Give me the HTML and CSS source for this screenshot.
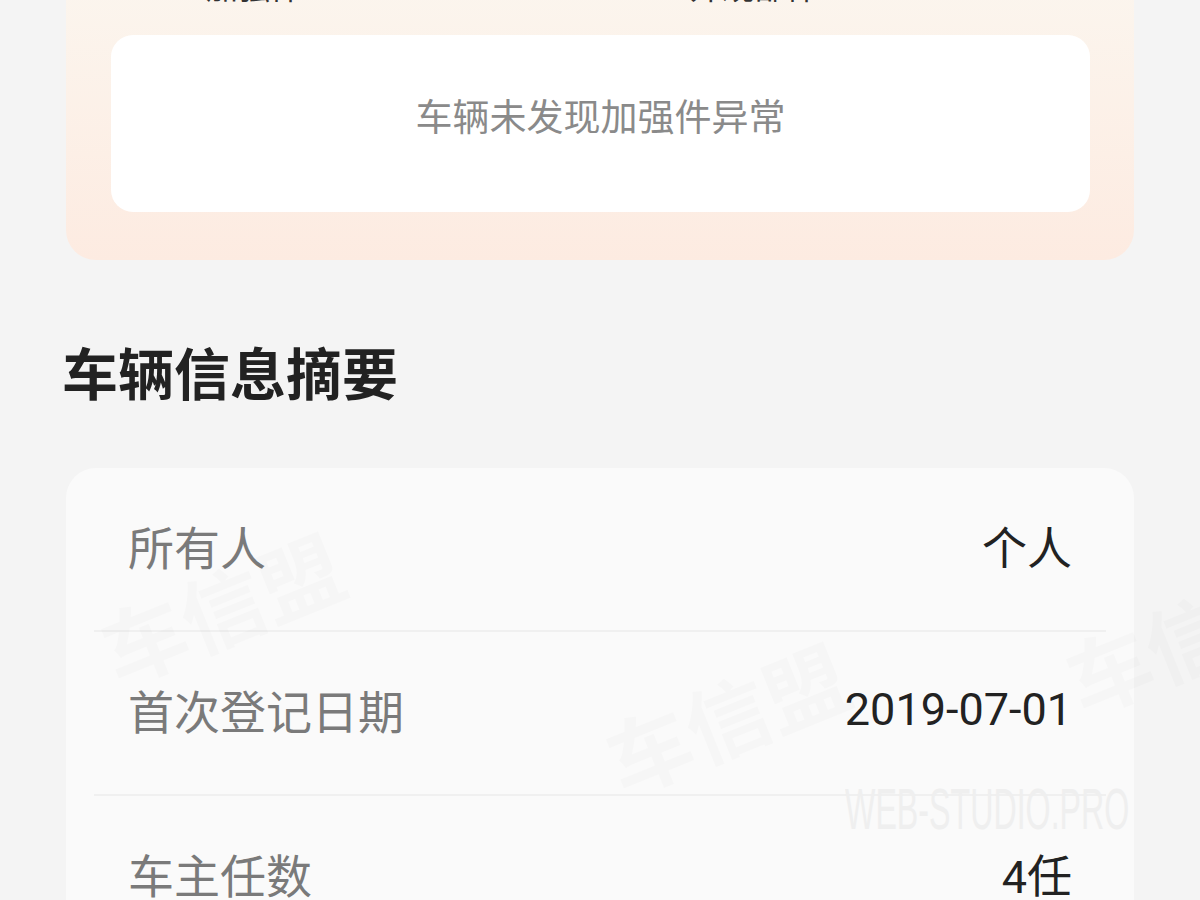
FILE: index.html
```html
<!DOCTYPE html>
<html lang="zh-CN">
<head>
  <meta charset="UTF-8" />
  <title>车辆信息摘要</title>
  <link rel="stylesheet" href="styles.css">
</head>
<body>

  <div class="page">
    <!-- Resultado da verificação de peças de reforço -->
    <section class="report">
      <div class="tabs">
        <span class="tab tab-left">加强件</span>
        <span class="tab tab-right">外观部件</span>
      </div>
      <div class="result">
        <p>车辆未发现加强件异常</p>
      </div>
    </section>

    <h2 class="section-title">车辆信息摘要</h2>

    <div class="info-card">
      <div class="info-row">
        <span class="label">所有人</span>
        <span class="value">个人</span>
      </div>
      <div class="info-row">
        <span class="label">首次登记日期</span>
        <span class="value">2019-07-01</span>
      </div>
      <div class="info-row">
        <span class="label">车主任数</span>
        <span class="value">4任</span>
      </div>
    </div>
  </div>

  <!-- marcas d'água -->
  <div class="watermark wm-1">车信盟</div>
  <div class="watermark wm-2">车信盟</div>
  <div class="watermark wm-3">车信盟</div>
  <div class="studio">WEB-STUDIO.PRO</div>

</body>
</html>
```

FILE: styles.css
```css
body {
  margin: 0;
  background: #f4f4f4;
  font-family: Roboto, "Noto Sans CJK SC", sans-serif;
  overflow: hidden;
  position: relative;
  height: 900px;
}

.page {
  width: 1068px;
  margin: -60px auto 0;
}

.report {
  background: linear-gradient(#fbf7f0, #fdebe1);
  border-radius: 30px;
  padding: 0 44px 48px 45px;
}

.tabs {
  height: 95px;
  display: flex;
  align-items: flex-end;
}

.tab {
  font-size: 32px;
  line-height: 32px;
  margin-bottom: 31px;
  color: #333;
}

.tab-left {
  margin-left: 95px;
}

.tab-right {
  margin-left: 388px;
}

.result {
  background: #fff;
  border-radius: 22px;
  height: 177px;
  display: flex;
  align-items: center;
  justify-content: center;
}

.result p {
  margin: 0 0 18px;
  font-size: 37px;
  color: #8a8a8a;
}

.section-title {
  margin: 84px 0 62px -4px;
  font-size: 56px;
  line-height: 65px;
  font-weight: bold;
  color: #222;
}

.info-card {
  background: #fafafa;
  border-radius: 30px;
  margin-top: -3px;
  height: 600px;
}

.info-row {
  margin: 0 28px;
  padding: 0 34px 8px;
  height: 154px;
  display: flex;
  align-items: center;
  justify-content: space-between;
  font-size: 46px;
}

.info-row + .info-row {
  border-top: 2px solid #f0f0f0;
}

.label {
  color: #7a7a7a;
}

.value {
  color: #222;
  font-size: 45px;
}

/* marcas d'água por cima do conteúdo */
.watermark {
  position: absolute;
  font-size: 84px;
  font-weight: bold;
  color: rgba(0, 0, 0, 0.016);
  transform: rotate(-22deg);
  white-space: nowrap;
  pointer-events: none;
}

.wm-1 { left: 95px; top: 545px; }
.wm-2 { left: 600px; top: 655px; }
.wm-3 { left: 1060px; top: 575px; }

.studio {
  position: absolute;
  left: 845px;
  top: 780px;
  font-family: "Liberation Sans Narrow", "Liberation Sans", sans-serif;
  font-size: 58px;
  line-height: 58px;
  color: #efefef;
  transform: scaleX(0.555);
  transform-origin: left top;
  white-space: nowrap;
}
```
